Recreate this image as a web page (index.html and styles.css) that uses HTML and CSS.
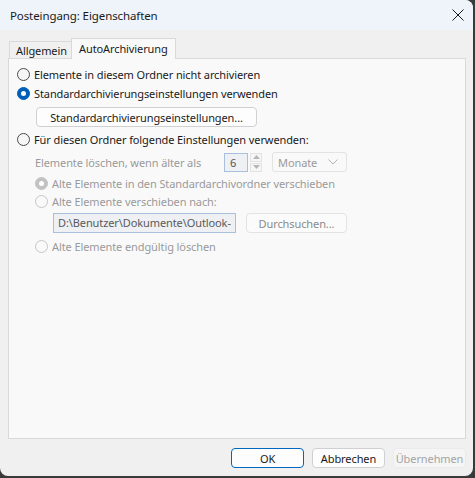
FILE: index.html
```html
<!DOCTYPE html>
<html lang="de">
<head>
<meta charset="utf-8">
<title>Posteingang: Eigenschaften</title>
<link rel="stylesheet" href="styles.css">
</head>
<body>
<div class="window">
  <div class="titlebar">
    <span class="title">Posteingang: Eigenschaften</span>
    <svg class="close" width="12" height="12" viewBox="0 0 12 12"><path d="M0.5 0.5 L11.5 11.5 M11.5 0.5 L0.5 11.5" stroke="#1a1a1a" stroke-width="1" fill="none"/></svg>
  </div>
  <div class="content">
    <div class="tabs">
      <div class="tab t1">Allgemein</div>
      <div class="tab t2 active">AutoArchivierung</div>
    </div>
    <div class="panel">
      <label class="row"><span class="radio"></span><span class="lbl">Elemente in diesem Ordner nicht archivieren</span></label>
      <label class="row"><span class="radio checked"></span><span class="lbl">Standardarchivierungseinstellungen verwenden</span></label>
      <div class="btnrow"><button class="btn wide">Standardarchivierungseinstellungen...</button></div>
      <label class="row r3"><span class="radio"></span><span class="lbl">Für diesen Ordner folgende Einstellungen verwenden:</span></label>
      <div class="agerow">
        <span class="lbl dim age">Elemente löschen, wenn älter als</span>
        <span class="spin-input">6</span>
        <span class="spin">
          <span class="spin-btn"><svg width="7" height="4" viewBox="0 0 7 4"><path d="M0 4 L3.5 0 L7 4 Z" fill="#b5b5b5"/></svg></span>
          <span class="spin-btn"><svg width="7" height="4" viewBox="0 0 7 4"><path d="M0 0 L3.5 4 L7 0 Z" fill="#b5b5b5"/></svg></span>
        </span>
        <span class="select"><span>Monate</span><svg width="10" height="6" viewBox="0 0 10 6"><path d="M0.5 0.5 L5 5 L9.5 0.5" stroke="#b0b0b0" fill="none"/></svg></span>
      </div>
      <label class="row sub r4"><span class="radio dis checked"></span><span class="lbl dim">Alte Elemente in den Standardarchivordner verschieben</span></label>
      <label class="row sub"><span class="radio dis"></span><span class="lbl dim">Alte Elemente verschieben nach:</span></label>
      <div class="pathrow">
        <span class="path">D:\Benutzer\Dokumente\Outlook-</span>
        <button class="btn browse">Durchsuchen...</button>
      </div>
      <label class="row sub r6"><span class="radio dis"></span><span class="lbl dim">Alte Elemente endgültig löschen</span></label>
    </div>
    <div class="footer">
      <button class="btn fbtn default">OK</button>
      <button class="btn fbtn">Abbrechen</button>
      <button class="btn fbtn disabled">Übernehmen</button>
    </div>
  </div>
</div>
</body>
</html>
```

FILE: styles.css
```css
html, body {
  margin: 0;
  padding: 0;
}
body {
  width: 475px;
  height: 478px;
  background: #3a3a3a;
  font-family: "Noto Sans", "Open Sans", sans-serif;
  font-size: 11px;
  letter-spacing: -0.1px;
  color: #1a1a1a;
  overflow: hidden;
}
.window {
  width: 473px;
  height: 476px;
  background: #f0f0f0;
  border-radius: 0 8px 8px 8px;
  overflow: hidden;
  display: flex;
  flex-direction: column;
}
.titlebar {
  height: 30px;
  flex: none;
  background: #eef4f9;
  display: flex;
  align-items: center;
  padding: 0 9px 0 10px;
}
.title {
  flex: 1;
  font-size: 11.5px;
  color: #1a1a1a;
}
.content {
  padding: 8px 0 0 8px;
  flex: 1;
}
.tabs {
  display: flex;
  align-items: flex-end;
  height: 20px;
  padding-left: 1px;
}
.tab {
  height: 17px;
  line-height: 17px;
  box-sizing: border-box;
  padding: 0 0 0 6px;
  border: 1px solid #d9d9d9;
  border-bottom: none;
  background: #f0f0f0;
  color: #1a1a1a;
}
.t1 { width: 63px; }
.tab.active {
  width: 105px;
  height: 21px;
  line-height: 19px;
  padding-left: 7px;
  margin-bottom: -1px;
  margin-left: -1px;
  background: #f9f9f9;
  position: relative;
  z-index: 1;
}
.panel {
  width: 456px;
  height: 373px;
  border: 1px solid #d9d9d9;
  background: #f9f9f9;
  padding-top: 6px;
}
.row {
  display: flex;
  align-items: center;
  height: 19px;
  padding-left: 8px;
}
.row.sub {
  height: 18px;
  padding-left: 26px;
}
.r3 { margin-top: 3px; }
.r4 { margin-top: 2px; }
.r6 { margin-top: 4px; }
.radio {
  width: 11px;
  height: 11px;
  border: 1px solid #4a4a4a;
  border-radius: 50%;
  background: #f6f6f6;
  margin-right: 4px;
  flex: none;
  display: flex;
  align-items: center;
  justify-content: center;
}
.radio.checked {
  background: #005fb8;
  border-color: #005fb8;
}
.radio.checked::after {
  content: "";
  width: 5px;
  height: 5px;
  border-radius: 50%;
  background: #fff;
}
.radio.dis {
  border-color: #c6c6c6;
  background: #f9f9f9;
}
.radio.dis.checked {
  background: #c2c2c2;
  border-color: #c2c2c2;
}
.lbl {
  white-space: nowrap;
}
.dim {
  color: #9a9a9a;
}
.btn {
  font-family: inherit;
  font-size: 11px;
  letter-spacing: -0.1px;
  background: #fdfdfd;
  border: 1px solid #d0d0d0;
  border-radius: 4px;
  color: #1a1a1a;
  padding: 0;
  height: 20px;
  box-sizing: border-box;
}
.btnrow {
  margin-top: 4px;
  padding-left: 27px;
}
.wide {
  width: 221px;
}
.agerow {
  margin-top: 3px;
  height: 20px;
  display: flex;
  align-items: center;
  padding-left: 26px;
}
.age {
  width: 189px;
}
.spin-input {
  width: 24px;
  height: 19px;
  box-sizing: border-box;
  border: 1px solid #a8c0dc;
  background: #eef0f3;
  color: #555;
  padding-left: 5px;
  line-height: 17px;
}
.spin {
  display: flex;
  flex-direction: column;
  margin-left: 2px;
  gap: 1px;
}
.spin-btn {
  width: 12px;
  height: 9px;
  border: 1px solid #e2e2e2;
  background: #f6f6f6;
  box-sizing: border-box;
  display: flex;
  align-items: center;
  justify-content: center;
}
.select {
  margin-left: 10px;
  width: 75px;
  height: 20px;
  box-sizing: border-box;
  border: 1px solid #e3e3e3;
  border-radius: 3px;
  background: #f9f9f9;
  color: #9a9a9a;
  display: flex;
  align-items: center;
  justify-content: space-between;
  padding: 0 8px 0 5px;
}
.pathrow {
  margin-top: 3px;
  height: 20px;
  display: flex;
  align-items: center;
  padding-left: 44px;
}
.path {
  width: 183px;
  height: 20px;
  box-sizing: border-box;
  border: 1px solid #a8c0dc;
  background: #eef0f3;
  color: #5a5a5a;
  line-height: 18px;
  padding-left: 4px;
  overflow: hidden;
  white-space: nowrap;
}
.browse {
  margin-left: 10px;
  width: 101px;
  color: #8a8a8a;
  background: #fbfbfb;
  border-color: #e3e3e3;
}
.footer {
  display: flex;
  justify-content: flex-end;
  gap: 8px;
  margin-top: 9px;
  padding-right: 7px;
}
.fbtn {
  width: 73px;
  height: 20px;
}
.fbtn.default {
  border-color: #0067c0;
}
.fbtn.disabled {
  color: #a4a4a4;
  background: #f5f5f5;
  border-color: #ebebeb;
}
```
